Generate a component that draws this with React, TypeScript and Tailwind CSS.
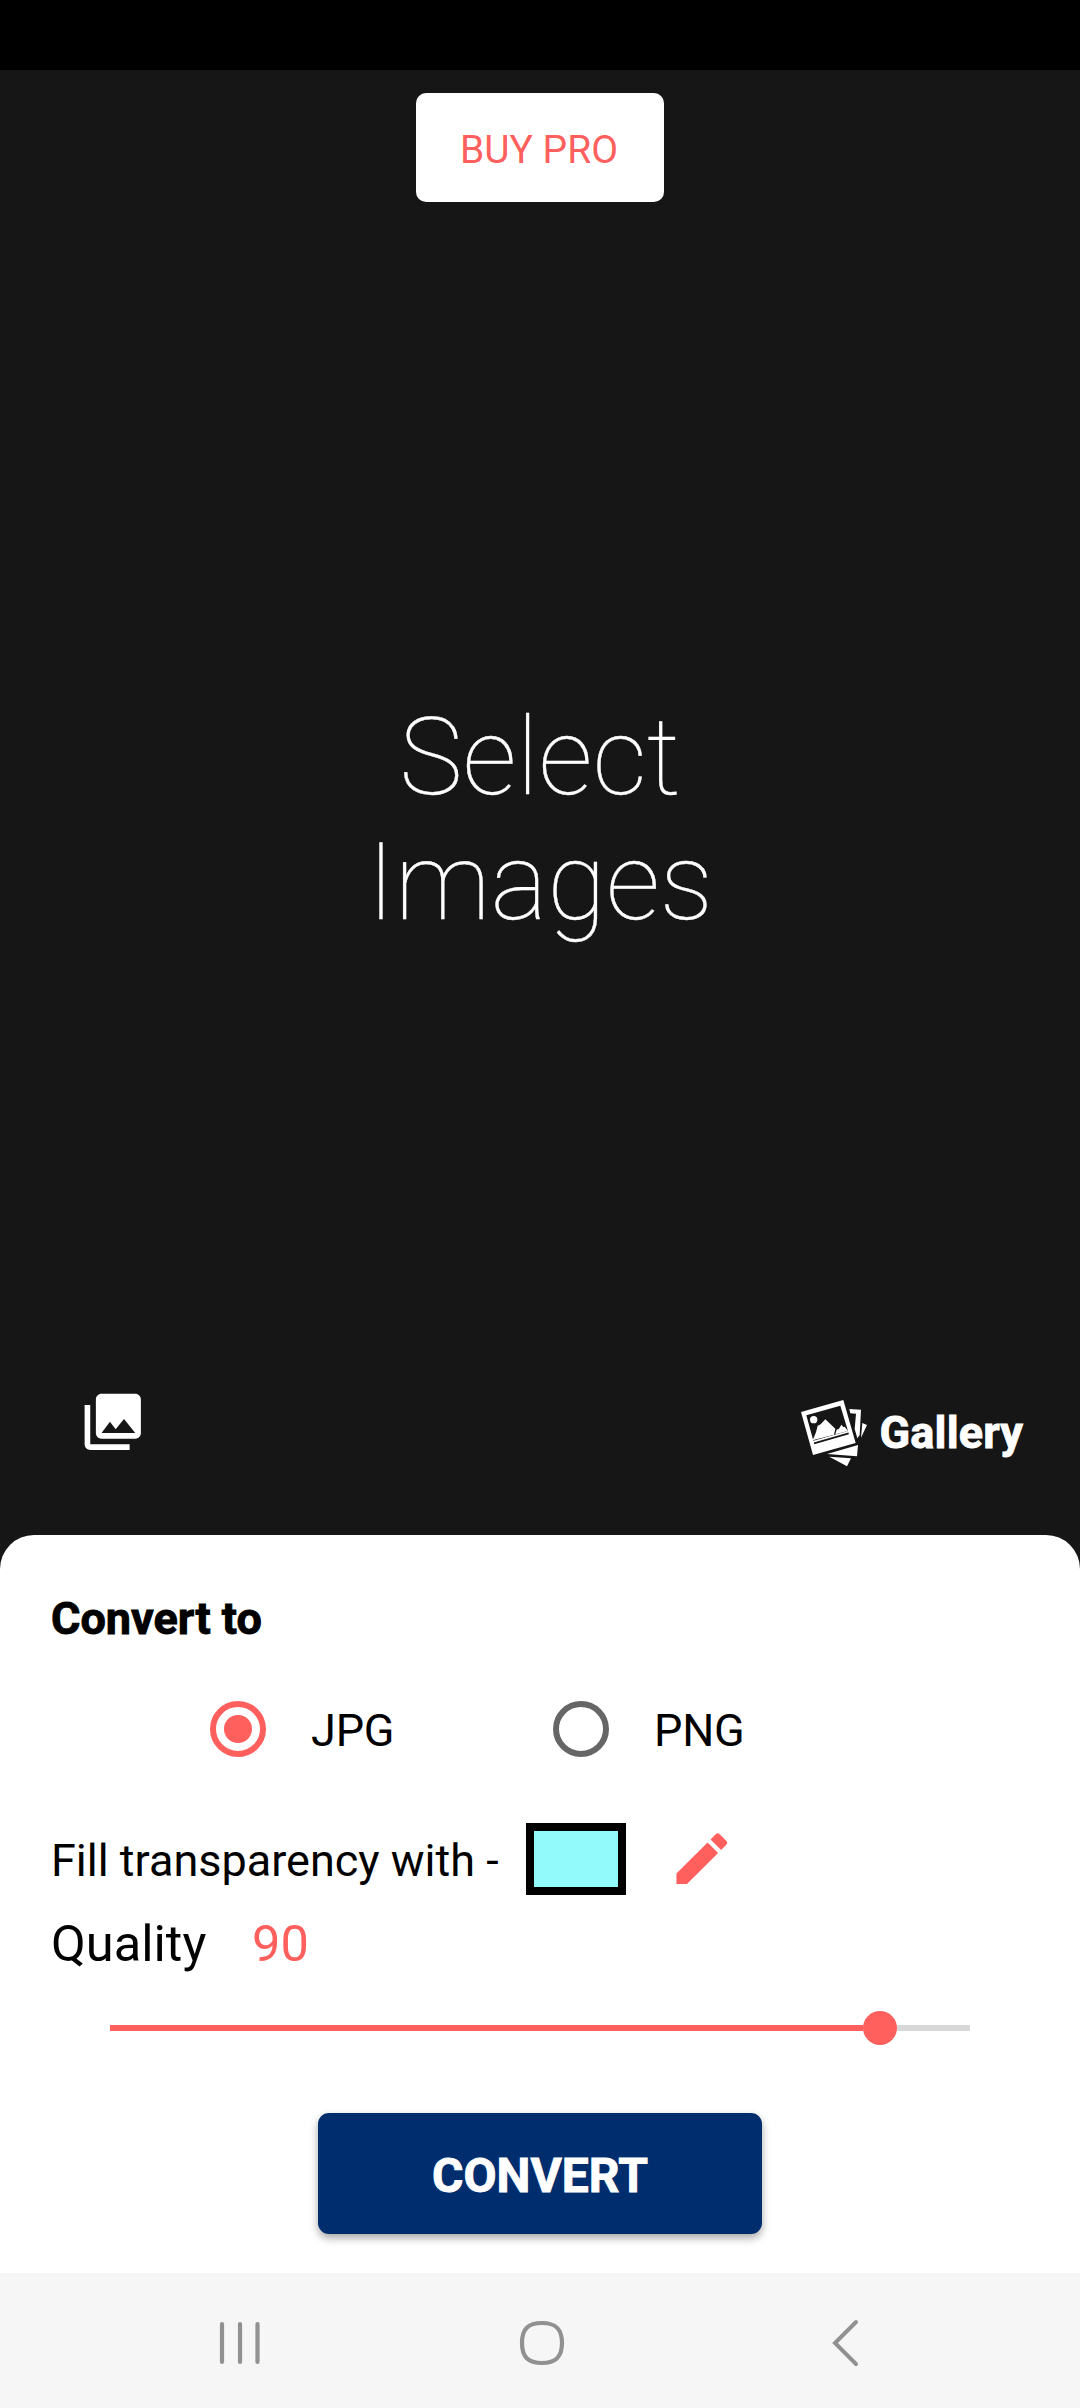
import { useState } from "react";
import { MdCollections, MdEdit } from "react-icons/md";

function GalleryIcon() {
  return (
    <svg viewBox="60 58 204 204" className="w-[68px] h-[68px]" fill="#fff">
      <path fillRule="evenodd" d="M63 97 190 61 227 190 99 226ZM79 107 100 183 204 154 181 78Z" />
      <circle cx="101" cy="120" r="11" />
      <path d="M98 182 108 158 113 138 122 134 136 119 166 147 162 165Z" />
      <path d="M166 164 170 150 177 147 184 135 190 142 194 141 204 154Z" />
      <path d="M102 191 206 161" stroke="#161616" strokeWidth="5.5" />
      <path d="M208 88 243 90 239 166 232 176 224 148 228 102 211 101Z" />
      <path d="M247 130 261 136 243 174Z" />
      <path d="M141 223 234 196 231 230Z" />
      <path d="M148 231 213 236 201 260Z" />
    </svg>
  );
}

function Radio({ label, checked, onSelect }: { label: string; checked: boolean; onSelect: () => void }) {
  return (
    <button onClick={onSelect} className="flex items-center w-[343px] text-left">
      <span className={`flex items-center justify-center size-14 rounded-full border-[6px] ${checked ? "border-[#ff5f5d]" : "border-[#666]"}`}>
        {checked && <span className="size-7 rounded-full bg-[#ff5f5d]" />}
      </span>
      <span className="ml-[45px] pt-0.5 text-[45px] leading-[53px] tracking-[-0.2px]">{label}</span>
    </button>
  );
}

export default function App() {
  const [format, setFormat] = useState("JPG");
  const quality = 90;

  return (
    <div className="w-[1080px] h-[2408px] flex flex-col bg-[#161616] text-black font-['Roboto',sans-serif] overflow-hidden">
      {/* Status bar */}
      <div className="h-[70px] shrink-0 bg-black" />

      {/* Preview area */}
      <main className="h-[1465px] shrink-0 flex flex-col items-center pt-[23px]">
        <button className="w-[248px] h-[109px] rounded-[10px] bg-white text-[#ff5f5d] text-[39px] pt-1.5 pr-0.5">BUY PRO</button>
        <h1 className="mt-[493px] text-center text-white font-thin text-[107px] leading-[125px] [-webkit-text-stroke:0.4px_white]">
          Select
          <br />
          Images
        </h1>
        <div className="mt-[443px] w-full flex justify-between items-start pl-[79px] pr-[57px]">
          <MdCollections className="size-[67.5px] text-white" />
          <div className="flex items-center mt-[11px]">
            <GalleryIcon />
            <span className="ml-[12px] pb-0.5 text-white font-bold text-[45px] leading-[53px] tracking-[0.15px] [-webkit-text-stroke:0.9px_white]">Gallery</span>
          </div>
        </div>
      </main>

      {/* Options sheet */}
      <section className="h-[738px] shrink-0 bg-white rounded-t-[34px] flex flex-col">
        <h2 className="mt-[57px] ml-[51px] font-bold text-[45px] leading-[53px] [-webkit-text-stroke:0.9px_black]">Convert to</h2>
        <div className="mt-[56px] ml-[210px] flex">
          <Radio label="JPG" checked={format === "JPG"} onSelect={() => setFormat("JPG")} />
          <Radio label="PNG" checked={format === "PNG"} onSelect={() => setFormat("PNG")} />
        </div>
        <div className="mt-[66px] ml-[51px] flex items-center h-[72px]">
          <span className="w-[475px] pt-0.5 text-[45px] leading-[53px]">Fill transparency with -</span>
          <span className="w-[100px] h-[72px] border-8 border-black bg-[#92fafa]" />
          <MdEdit className="ml-[42px] size-[67.5px] text-[#ff5f5d]" />
        </div>
        <div className="mt-[19px] ml-[51px] flex text-[50.6px] leading-[60px]">
          <span className="w-[201px]">Quality</span>
          <span className="text-[#ff5f5d]">{quality}</span>
        </div>
        <div className="mt-[37px] mx-[110px] h-[34px] flex items-center">
          <div className="h-1.5 bg-[#ff5f5d]" style={{ width: `${quality - 2.5}%` }} />
          <div className="size-[34px] rounded-full bg-[#ff5f5d]" />
          <div className="h-1.5 flex-1 bg-[#d8d8d8]" />
        </div>
        <button className="mt-[68px] self-center w-[444px] h-[121px] rounded-[11px] bg-[#002d6d] text-white font-bold text-[48px] pt-1 shadow-[0_4px_8px_rgba(0,0,0,0.35)] [-webkit-text-stroke:0.9px_white]">
          CONVERT
        </button>
      </section>

      {/* System navigation */}
      <nav className="h-[135px] shrink-0 bg-[#f6f6f6] flex items-center pt-1 pl-[219px]">
        <svg viewBox="0 0 42 46" className="w-[42px] h-[46px]" stroke="#919191" strokeWidth="4.2" strokeLinecap="round">
          <path d="M3 4V42M21 4V42M38.5 4V42" />
        </svg>
        <svg viewBox="0 0 46 46" className="ml-[258px] w-[46px] h-[46px]" fill="none" stroke="#919191" strokeWidth="4.2">
          <path d="M23 3C37 3 43 9 43 23S37 43 23 43 3 37 3 23 9 3 23 3Z" />
        </svg>
        <svg viewBox="0 0 30 48" className="ml-[265px] w-[30px] h-[48px]" fill="none" stroke="#919191" strokeWidth="4" strokeLinecap="round">
          <path d="M26 3 5 24 26 45" />
        </svg>
      </nav>
    </div>
  );
}
